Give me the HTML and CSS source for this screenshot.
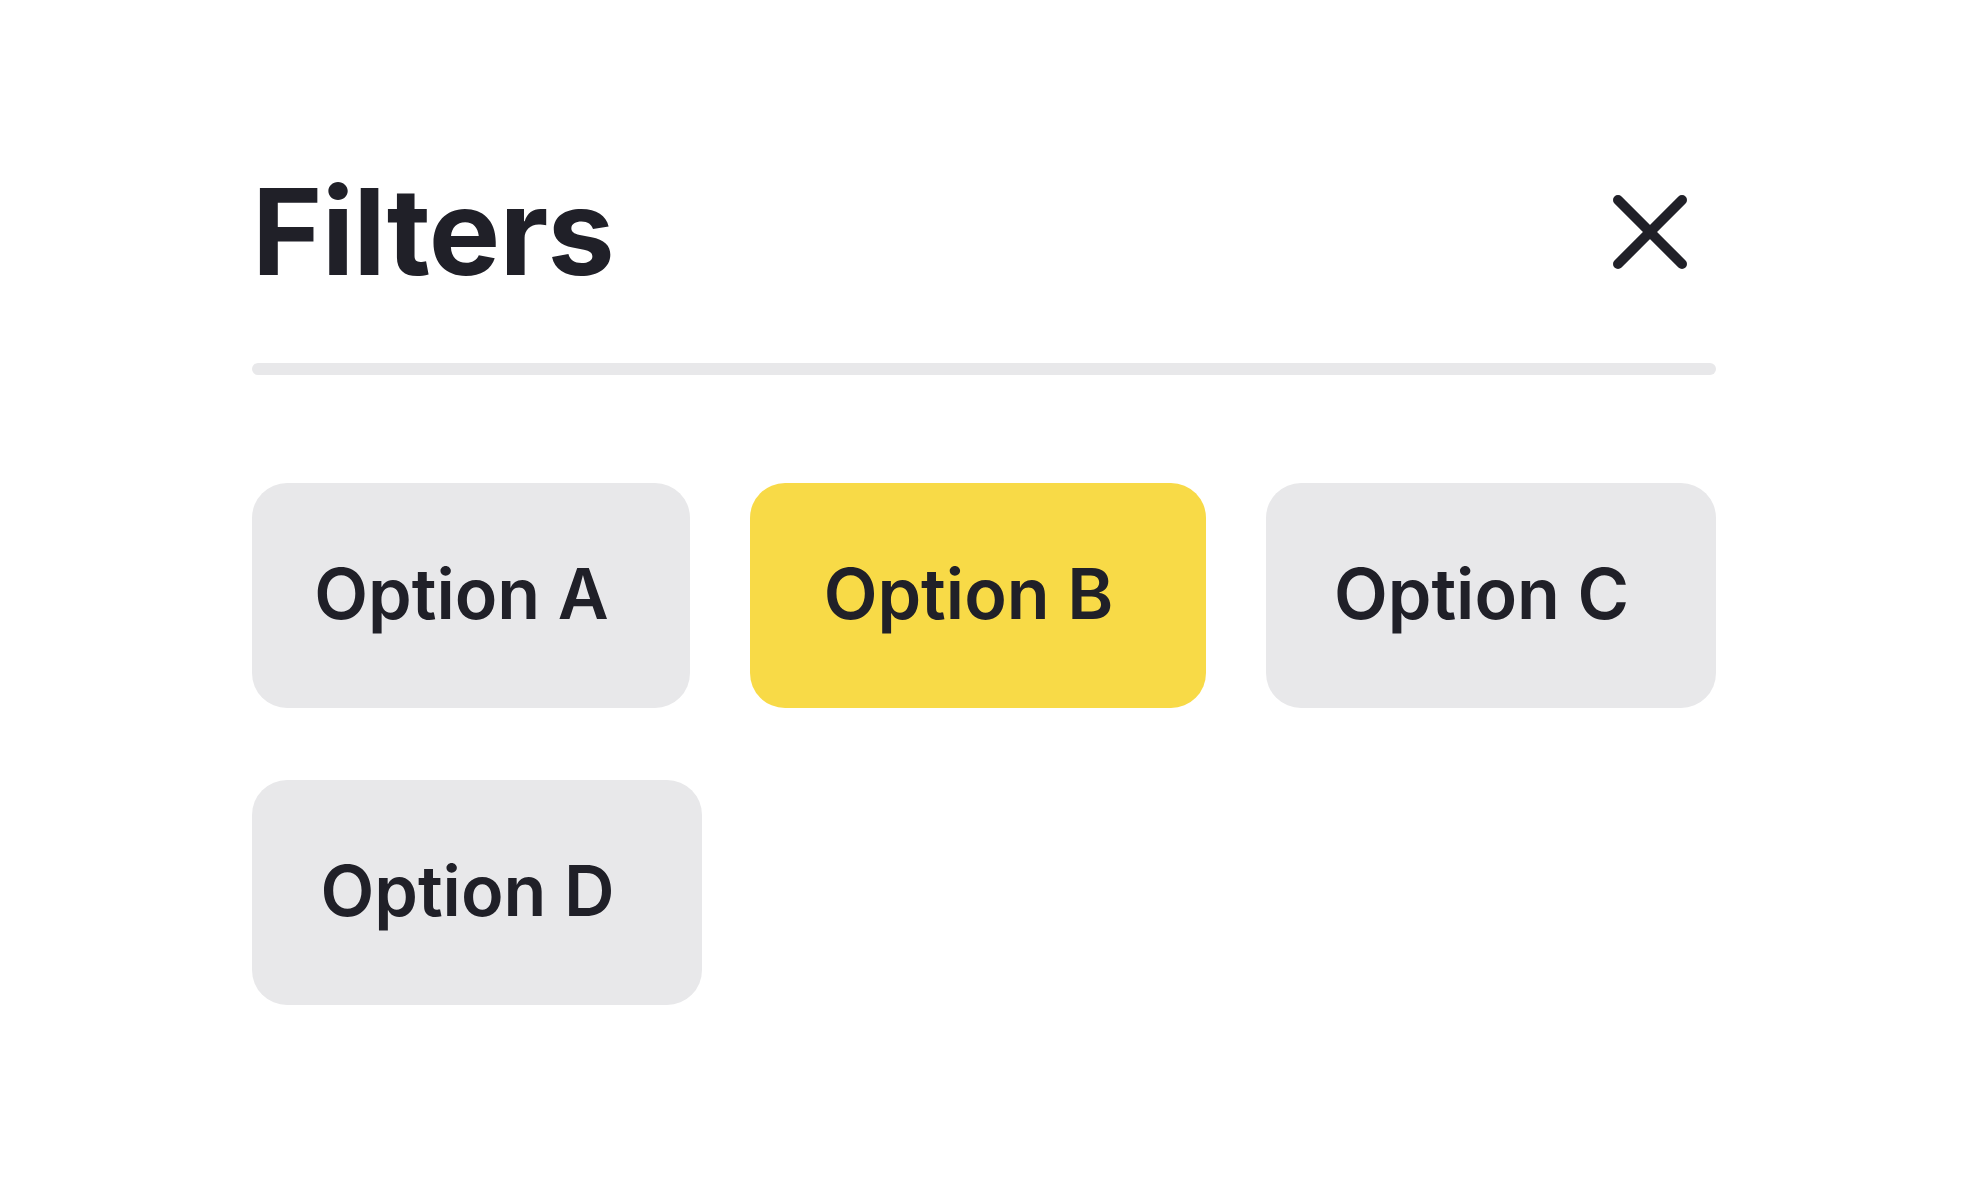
FILE: index.html
```html
<!DOCTYPE html>
<html lang="en">
<head>
<meta charset="utf-8">
<title>Filters</title>
<link rel="stylesheet" href="styles.css">
</head>
<body>
<main class="panel">
  <header class="panel-header">
    <h1 class="panel-title">Filters</h1>
    <button class="close-btn" type="button" aria-label="Close">
      <svg class="close-icon" viewBox="0 0 74 74" width="74" height="74" aria-hidden="true">
        <path d="M5 5 L69 69 M69 5 L5 69" fill="none" stroke="currentColor" stroke-width="10" stroke-linecap="round"/>
      </svg>
    </button>
  </header>
  <div class="divider"></div>
  <div class="chips">
    <button class="chip chip-a" type="button">Option A</button>
    <button class="chip chip-b chip-active" type="button">Option B</button>
    <button class="chip chip-c" type="button">Option C</button>
    <button class="chip chip-d" type="button">Option D</button>
  </div>
</main>
</body>
</html>
```
FILE: styles.css
```css
html, body {
  margin: 0;
  padding: 0;
  background: #ffffff;
}

body {
  font-family: Inter, "Noto Sans", sans-serif;
  color: #202028;
}

.panel {
  padding: 160px 252px 0;
}

.panel-header {
  display: flex;
  align-items: center;
  justify-content: space-between;
  height: 144px;
}

.panel-title {
  margin: 0;
  font-size: 120px;
  font-weight: 700;
  line-height: 1;
  letter-spacing: -0.8px;
  color: #202028;
}

.close-btn {
  display: flex;
  align-items: center;
  justify-content: center;
  padding: 0;
  margin-right: 29px;
  border: 0;
  background: none;
  color: #202028;
  cursor: pointer;
}

.close-icon {
  display: block;
}

.divider {
  margin-top: 59px;
  height: 12px;
  border-radius: 6px;
  background: #e8e8ea;
}

.chips {
  display: flex;
  flex-wrap: wrap;
  column-gap: 60px;
  row-gap: 72px;
  margin-top: 108px;
}

.chip {
  box-sizing: border-box;
  flex: 0 0 auto;
  height: 225px;
  padding: 0 19px 5px 0;
  border: 0;
  border-radius: 35px;
  background: #e8e8ea;
  font-family: Inter, "Noto Sans", sans-serif;
  font-size: 70px;
  font-weight: 600;
  letter-spacing: 0;
  text-align: center;
  color: #202028;
  cursor: pointer;
  white-space: nowrap;
}

.chip-a { width: 438px; }
.chip-b { width: 456px; }
.chip-c { width: 450px; }
.chip-d { width: 450px; }

.chip-active {
  background: #f8da47;
}
```
